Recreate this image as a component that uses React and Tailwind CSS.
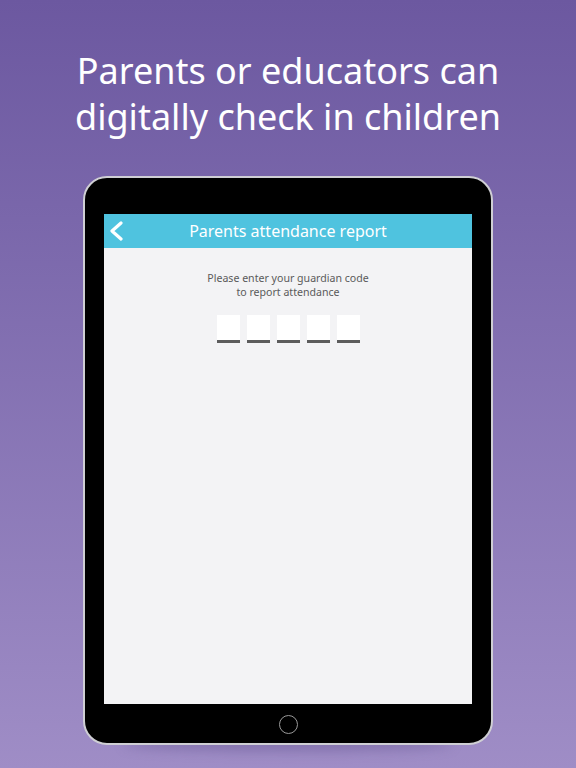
export default function App() {
  const slots = [0, 1, 2, 3, 4]

  return (
    <div
      className="flex h-[768px] w-[576px] flex-col items-center overflow-hidden bg-gradient-to-b from-[#6c58a0] to-[#9f8dc6]"
      style={{ fontFamily: '"Noto Sans", "Open Sans", sans-serif' }}
    >
      <h1 className="pt-[48px] text-center text-[36px] leading-[46px] font-normal text-white">
        Parents or educators can
        <br />
        digitally check in children
      </h1>

      <div className="relative mt-[36px]">
        <div className="absolute -bottom-[6px] left-[40px] right-[40px] h-[14px] rounded-[50%] bg-[#5b4a88]/40 blur-[6px]" />
        <div className="relative flex h-[569px] w-[410px] flex-col items-center rounded-[24px] border-2 border-[#cfcfd4] bg-black pt-[36px]">
          <div className="flex h-[490px] w-[368px] flex-col bg-[#f3f3f5]">
            <div className="relative flex h-[34px] items-center justify-center bg-[#4fc3df]">
              <svg
                className="absolute left-[4px] top-[7px]"
                width="17"
                height="20"
                viewBox="0 0 17 20"
                fill="none"
                stroke="white"
                strokeWidth="3.2"
                strokeLinecap="round"
                strokeLinejoin="round"
              >
                <path d="M13 2 L4 10 L13 18" />
              </svg>
              <span className="text-[16px] text-white">Parents attendance report</span>
            </div>

            <div className="flex flex-col items-center pt-[23px]">
              <p className="text-center text-[10.6px] leading-[14px] text-[#5a5a5a]">
                Please enter your guardian code
                <br />
                to report attendance
              </p>
              <div className="mt-[16px] flex gap-[7px]">
                {slots.map((i) => (
                  <div key={i} className="flex w-[23px] flex-col">
                    <div className="h-[25px] bg-white" />
                    <div className="h-[3px] bg-[#5c5c5c]" />
                  </div>
                ))}
              </div>
            </div>
          </div>
          <div className="mt-[11px] h-[19px] w-[19px] rounded-full border-[1.5px] border-[#9a9a9a]" />
        </div>
      </div>
    </div>
  )
}
